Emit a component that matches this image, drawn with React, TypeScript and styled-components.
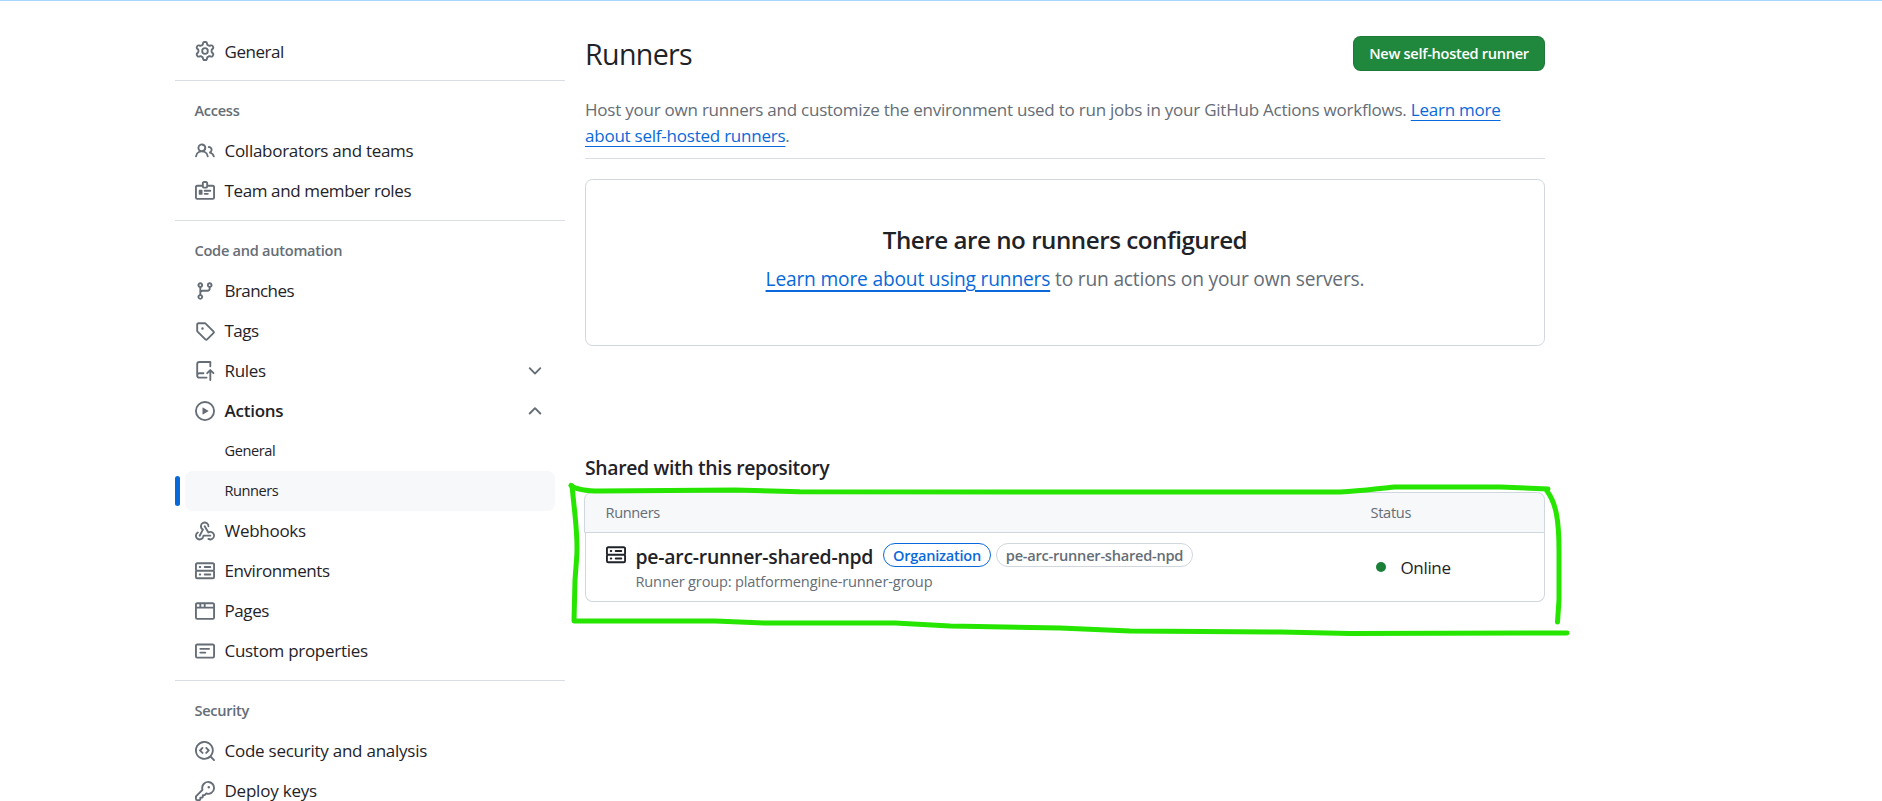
import React from "react";
import styled, { createGlobalStyle, css } from "styled-components";

const GlobalStyle = createGlobalStyle`
  *, *::before, *::after { box-sizing: border-box; }
  html, body { margin: 0; padding: 0; background: #fff; }
  body {
    height: 801px;
    overflow: hidden;
    color: #1f2328;
    font-family: "Open Sans", "Noto Sans", sans-serif;
    font-size: 17px;
  }
  h1, h2, h3, p { margin: 0; font-weight: 400; }
`;

const icons = {
  gear: "M8 0a8.2 8.2 0 0 1 .701.031C9.444.095 9.99.645 10.16 1.29l.288 1.107c.018.066.079.158.212.224.231.114.454.243.668.386.123.082.233.09.299.071l1.103-.303c.644-.176 1.392.021 1.82.63.27.385.506.792.704 1.218.315.675.111 1.422-.364 1.891l-.814.806c-.049.048-.098.147-.088.294.016.257.016.515 0 .772-.01.147.038.246.088.294l.814.806c.475.469.679 1.216.364 1.891a7.977 7.977 0 0 1-.704 1.217c-.428.61-1.176.807-1.82.63l-1.102-.302c-.067-.019-.177-.011-.3.071a5.909 5.909 0 0 1-.668.386c-.133.066-.194.158-.211.224l-.29 1.106c-.168.646-.715 1.196-1.458 1.26a8.006 8.006 0 0 1-1.402 0c-.743-.064-1.289-.614-1.458-1.26l-.289-1.106c-.018-.066-.079-.158-.212-.224a5.738 5.738 0 0 1-.668-.386c-.123-.082-.233-.09-.299-.071l-1.103.303c-.644.176-1.392-.021-1.82-.63a8.12 8.12 0 0 1-.704-1.218c-.315-.675-.111-1.422.363-1.891l.815-.806c.05-.048.098-.147.088-.294a6.214 6.214 0 0 1 0-.772c.01-.147-.038-.246-.088-.294l-.815-.806C.635 6.045.431 5.298.746 4.623a7.92 7.92 0 0 1 .704-1.217c.428-.61 1.176-.807 1.82-.63l1.102.302c.067.019.177.011.3-.071.214-.143.437-.272.668-.386.133-.066.194-.158.211-.224l.29-1.106C6.009.645 6.556.095 7.299.03 7.53.01 7.764 0 8 0Zm-.571 1.525c-.036.003-.108.036-.137.146l-.289 1.105c-.147.561-.549.967-.998 1.189-.173.086-.34.183-.5.29-.417.278-.97.423-1.529.27l-1.103-.303c-.109-.03-.175.016-.195.045-.22.312-.412.644-.573.99-.014.031-.021.11.059.19l.815.806c.411.406.562.957.53 1.456a4.709 4.709 0 0 0 0 .582c.032.499-.119 1.05-.53 1.456l-.815.806c-.081.08-.073.159-.059.19.162.346.353.677.573.989.02.03.085.076.195.046l1.102-.303c.56-.153 1.113-.008 1.53.27.161.107.328.204.501.29.447.222.85.629.997 1.189l.289 1.105c.029.109.101.143.137.146a6.6 6.6 0 0 0 1.142 0c.036-.003.108-.036.137-.146l.289-1.105c.147-.561.549-.967.998-1.189.173-.086.34-.183.5-.29.417-.278.97-.423 1.529-.27l1.103.303c.109.029.175-.016.195-.045.22-.313.411-.644.573-.99.014-.031.021-.11-.059-.19l-.815-.806c-.411-.406-.562-.957-.53-1.456a4.709 4.709 0 0 0 0-.582c-.032-.499.119-1.05.53-1.456l.815-.806c.081-.08.073-.159.059-.19a6.464 6.464 0 0 0-.573-.989c-.02-.03-.085-.076-.195-.046l-1.102.303c-.56.153-1.113.008-1.53-.27a4.44 4.44 0 0 0-.501-.29c-.447-.222-.85-.629-.997-1.189l-.289-1.105c-.029-.11-.101-.143-.137-.146a6.6 6.6 0 0 0-1.142 0ZM11 8a3 3 0 1 1-6 0 3 3 0 0 1 6 0ZM9.5 8a1.5 1.5 0 1 0-3.001.001A1.5 1.5 0 0 0 9.5 8Z",
  people: "M2 5.5a3.5 3.5 0 1 1 5.898 2.549 5.508 5.508 0 0 1 3.034 4.084.75.75 0 1 1-1.482.235 4 4 0 0 0-7.9 0 .75.75 0 0 1-1.482-.236A5.507 5.507 0 0 1 3.102 8.05 3.493 3.493 0 0 1 2 5.5ZM11 4a3.001 3.001 0 0 1 2.22 5.018 5.01 5.01 0 0 1 2.56 3.012.749.749 0 0 1-.885.954.752.752 0 0 1-.549-.514 3.507 3.507 0 0 0-2.522-2.372.75.75 0 0 1-.574-.73v-.352a.75.75 0 0 1 .416-.672A1.5 1.5 0 0 0 11 5.5.75.75 0 0 1 11 4Zm-5.5-.5a2 2 0 1 0-.001 3.999A2 2 0 0 0 5.5 3.5Z",
  badge: "M3 7.5a.5.5 0 0 1 .5-.5h2a.5.5 0 0 1 .5.5v3a.5.5 0 0 1-.5.5h-2a.5.5 0 0 1-.5-.5v-3Zm10 .25a.75.75 0 0 1-.75.75h-4.5a.75.75 0 0 1 0-1.5h4.5a.75.75 0 0 1 .75.75ZM10.25 11h-2.5a.75.75 0 0 1 0-1.5h2.5a.75.75 0 0 1 0 1.5Z M7.25 0h1.5c.966 0 1.75.784 1.75 1.75V3h3.75c.966 0 1.75.784 1.75 1.75v8.5A1.75 1.75 0 0 1 14.25 15H1.75A1.75 1.75 0 0 1 0 13.25v-8.5C0 3.784.784 3 1.75 3H5.5V1.75C5.5.784 6.284 0 7.25 0Zm3.232 4.5A1.75 1.75 0 0 1 8.75 6h-1.5a1.75 1.75 0 0 1-1.732-1.5H1.75a.25.25 0 0 0-.25.25v8.5c0 .138.112.25.25.25h12.5a.25.25 0 0 0 .25-.25v-8.5a.25.25 0 0 0-.25-.25ZM7 1.75v2.5c0 .138.112.25.25.25h1.5A.25.25 0 0 0 9 4.25v-2.5a.25.25 0 0 0-.25-.25h-1.5a.25.25 0 0 0-.25.25Z",
  branch: "M9.5 3.25a2.25 2.25 0 1 1 3 2.122V6A2.5 2.5 0 0 1 10 8.5H6a1 1 0 0 0-1 1v1.128a2.251 2.251 0 1 1-1.5 0V5.372a2.25 2.25 0 1 1 1.5 0v1.836A2.493 2.493 0 0 1 6 7h4a1 1 0 0 0 1-1v-.628A2.25 2.25 0 0 1 9.5 3.25Zm-6 0a.75.75 0 1 0 1.5 0 .75.75 0 0 0-1.5 0Zm8.25-.75a.75.75 0 1 0 0 1.5.75.75 0 0 0 0-1.5ZM4.25 12a.75.75 0 1 0 0 1.5.75.75 0 0 0 0-1.5Z",
  tag: "M1 7.775V2.75C1 1.784 1.784 1 2.75 1h5.025c.464 0 .91.184 1.238.513l6.25 6.25a1.75 1.75 0 0 1 0 2.474l-5.026 5.026a1.75 1.75 0 0 1-2.474 0l-6.25-6.25A1.752 1.752 0 0 1 1 7.775Zm1.5 0c0 .066.026.13.073.177l6.25 6.25a.25.25 0 0 0 .354 0l5.025-5.025a.25.25 0 0 0 0-.354l-6.25-6.25a.25.25 0 0 0-.177-.073H2.75a.25.25 0 0 0-.25.25ZM6 5a1 1 0 1 1 0 2 1 1 0 0 1 0-2Z",
  rules: "M1 2.5A2.5 2.5 0 0 1 3.5 0h8.75a.75.75 0 0 1 .75.75v3.5a.75.75 0 0 1-1.5 0V1.5h-8a1 1 0 0 0-1 1v6.708A2.493 2.493 0 0 1 3.5 9h3.25a.75.75 0 0 1 0 1.5H3.5a1 1 0 1 0 0 2h5.75a.75.75 0 0 1 0 1.5H3.5A2.5 2.5 0 0 1 1 11.5v-9Zm13.23 7.79a.75.75 0 0 0 1.06-1.06l-2.505-2.505a.75.75 0 0 0-1.06 0L9.22 9.229a.75.75 0 0 0 1.06 1.061l1.225-1.224v6.184a.75.75 0 0 0 1.5 0V9.066l1.224 1.224Z",
  play: "M8 0a8 8 0 1 1 0 16A8 8 0 0 1 8 0ZM1.5 8a6.5 6.5 0 1 0 13 0 6.5 6.5 0 0 0-13 0Zm4.879-2.773 4.264 2.559a.25.25 0 0 1 0 .428l-4.264 2.559A.25.25 0 0 1 6 10.559V5.442a.25.25 0 0 1 .379-.215Z",
  webhook: "M5.5 4.25a2.25 2.25 0 0 1 4.5 0 .75.75 0 0 0 1.5 0 3.75 3.75 0 1 0-6.14 2.889l-2.272 4.258a.75.75 0 0 0 1.324.706L7 7.25a.75.75 0 0 0-.309-1.015A2.25 2.25 0 0 1 5.5 4.25Z M7.364 3.607a.75.75 0 0 1 1.03.257l2.608 4.349a3.75 3.75 0 1 1-.628 6.785.75.75 0 0 1 .752-1.299 2.25 2.25 0 1 0-.033-3.88.75.75 0 0 1-1.03-.256L7.107 4.636a.75.75 0 0 1 .257-1.03Z M2.9 8.776A.75.75 0 0 1 2.625 9.8 2.25 2.25 0 1 0 6 11.75a.75.75 0 0 1 .75-.751h5.5a.75.75 0 0 1 0 1.5H7.425a3.751 3.751 0 1 1-5.55-3.998.75.75 0 0 1 1.024.274Z",
  server: "M1.75 1h12.5c.966 0 1.75.784 1.75 1.75v4c0 .372-.116.717-.314 1 .198.283.314.628.314 1v4a1.75 1.75 0 0 1-1.75 1.75H1.75A1.75 1.75 0 0 1 0 12.75v-4c0-.358.109-.707.314-1a1.739 1.739 0 0 1-.314-1v-4C0 1.784.784 1 1.75 1ZM1.5 2.75v4c0 .138.112.25.25.25h12.5a.25.25 0 0 0 .25-.25v-4a.25.25 0 0 0-.25-.25H1.75a.25.25 0 0 0-.25.25Zm.25 5.75a.25.25 0 0 0-.25.25v4c0 .138.112.25.25.25h12.5a.25.25 0 0 0 .25-.25v-4a.25.25 0 0 0-.25-.25ZM7 4.75A.75.75 0 0 1 7.75 4h4.5a.75.75 0 0 1 0 1.5h-4.5A.75.75 0 0 1 7 4.75ZM7.75 10h4.5a.75.75 0 0 1 0 1.5h-4.5a.75.75 0 0 1 0-1.5ZM3 4.75A.75.75 0 0 1 3.75 4h.5a.75.75 0 0 1 0 1.5h-.5A.75.75 0 0 1 3 4.75ZM3.75 10h.5a.75.75 0 0 1 0 1.5h-.5a.75.75 0 0 1 0-1.5Z",
  browser: "M0 2.75C0 1.784.784 1 1.75 1h12.5c.966 0 1.75.784 1.75 1.75v10.5A1.75 1.75 0 0 1 14.25 15H1.75A1.75 1.75 0 0 1 0 13.25ZM14.5 6h-13v7.25c0 .138.112.25.25.25h12.5a.25.25 0 0 0 .25-.25Zm-6-3.5v2h6V2.75a.25.25 0 0 0-.25-.25ZM5 2.5v2h2v-2Zm-3.25 0a.25.25 0 0 0-.25.25V4.5h2v-2Z",
  note: "M0 3.75C0 2.784.784 2 1.75 2h12.5c.966 0 1.75.784 1.75 1.75v8.5A1.75 1.75 0 0 1 14.25 14H1.75A1.75 1.75 0 0 1 0 12.25Zm1.75-.25a.25.25 0 0 0-.25.25v8.5c0 .138.112.25.25.25h12.5a.25.25 0 0 0 .25-.25v-8.5a.25.25 0 0 0-.25-.25ZM3.5 6.25a.75.75 0 0 1 .75-.75h7a.75.75 0 0 1 0 1.5h-7a.75.75 0 0 1-.75-.75Zm.75 2.25h4a.75.75 0 0 1 0 1.5h-4a.75.75 0 0 1 0-1.5Z",
  codescan: "M8.47 4.97a.75.75 0 0 0 0 1.06L9.94 7.5 8.47 8.97a.75.75 0 1 0 1.06 1.06l2-2a.75.75 0 0 0 0-1.06l-2-2a.75.75 0 0 0-1.06 0ZM6.53 6.03a.75.75 0 0 0-1.06-1.06l-2 2a.75.75 0 0 0 0 1.06l2 2a.75.75 0 1 0 1.06-1.06L5.06 7.5l1.47-1.47Z M12.246 13.307a7.501 7.501 0 1 1 1.06-1.06l2.474 2.473a.749.749 0 0 1-.326 1.275.749.749 0 0 1-.734-.215ZM1.5 7.5a6.002 6.002 0 0 0 3.608 5.504 6.002 6.002 0 0 0 6.486-1.117.748.748 0 0 1 .292-.293A6 6 0 1 0 1.5 7.5Z",
  key: "M10.5 0a5.499 5.499 0 1 1-1.288 10.848l-.932.932a.749.749 0 0 1-.53.22H7v.75a.749.749 0 0 1-.22.53l-.5.5a.749.749 0 0 1-.53.22H5v.75a.749.749 0 0 1-.22.53l-.5.5a.749.749 0 0 1-.53.22h-2A1.75 1.75 0 0 1 0 14.25v-2c0-.199.079-.389.22-.53l4.932-4.932A5.5 5.5 0 0 1 10.5 0Zm-4 5.5c-.001.431.069.86.205 1.269a.75.75 0 0 1-.181.768L1.5 12.56v1.69c0 .138.112.25.25.25h1.69l.06-.06v-1.19a.75.75 0 0 1 .75-.75h1.19l.06-.06v-1.19a.75.75 0 0 1 .75-.75h1.19l1.023-1.025a.75.75 0 0 1 .768-.18A4 4 0 1 0 6.5 5.5ZM11 6a1 1 0 1 1 0-2 1 1 0 0 1 0 2Z",
  down: "M12.78 5.22a.749.749 0 0 1 0 1.06l-4.25 4.25a.749.749 0 0 1-1.06 0L3.22 6.28a.749.749 0 1 1 1.06-1.06L8 8.939l3.72-3.719a.749.749 0 0 1 1.06 0Z",
  up: "M3.22 10.53a.749.749 0 0 1 0-1.06l4.25-4.25a.749.749 0 0 1 1.06 0l4.25 4.25a.749.749 0 1 1-1.06 1.06L8 6.811 4.28 10.53a.749.749 0 0 1-1.06 0Z",
};
type IconName = keyof typeof icons;

const Glyph = styled.svg`
  display: block;
  flex: none;
  width: 20px;
  height: 20px;
  fill: currentColor;
`;
const Icon = ({ name }: { name: IconName }) => (
  <Glyph viewBox="0 0 16 16" aria-hidden="true">
    <path fillRule="evenodd" d={icons[name]} />
  </Glyph>
);

interface Tracked {
  $track?: number;
}
const tracking = css<Tracked>`
  letter-spacing: ${(p) => p.$track ?? 0}px;
`;

const Page = styled.div`
  position: relative;
  display: flex;
  gap: 20px;
  height: 801px;
  padding: 30px 0 0 175px;
  border-top: 1px solid #a5d6ff;
  overflow: hidden;
`;

const Sidebar = styled.nav`
  width: 390px;
  flex: none;
`;
const SectionTitle = styled.h3<Tracked>`
  ${tracking}
  height: 50px;
  padding: 9px 19.5px 0;
  line-height: 41px;
  font-size: 14.6px;
  font-weight: 600;
  color: #656d76;
`;
const NavItem = styled.a<{ $selected?: boolean }>`
  position: relative;
  display: flex;
  align-items: center;
  gap: 9.5px;
  height: 40px;
  margin: 0 10px;
  padding: 0 10px;
  border-radius: 7.5px;
  color: #656d76;
  ${(p) =>
    p.$selected &&
    css`
      background: #f6f8fa;
      &::before {
        content: "";
        position: absolute;
        left: -10px;
        top: 5px;
        width: 5px;
        height: 30px;
        border-radius: 7.5px;
        background: #0969da;
      }
    `}
`;
const NavLabel = styled.span<Tracked & { $sub?: boolean; $strong?: boolean }>`
  ${tracking}
  flex: 1;
  padding: ${(p) => (p.$sub ? "0 0 2px 29.5px" : "0")};
  color: #1f2328;
  font-size: ${(p) => (p.$sub ? 14.6 : 17)}px;
  font-weight: ${(p) => (p.$strong ? 600 : 400)};
  line-height: 24px;
  white-space: nowrap;
`;
const Section = styled.section`
  & + & {
    margin-top: 9px;
    border-top: 1px solid #d8dee4;
  }
  &:first-child ${NavLabel} {
    padding-top: 2px;
  }
`;

interface Entry {
  label: string;
  track: number;
  icon?: IconName;
  toggle?: "up" | "down";
  strong?: boolean;
  selected?: boolean;
}
const sections: { title?: string; track?: number; entries: Entry[] }[] = [
  { entries: [{ label: "General", icon: "gear", track: -0.45 }] },
  {
    title: "Access",
    track: -0.3,
    entries: [
      { label: "Collaborators and teams", icon: "people", track: -0.28 },
      { label: "Team and member roles", icon: "badge", track: -0.38 },
    ],
  },
  {
    title: "Code and automation",
    track: -0.27,
    entries: [
      { label: "Branches", icon: "branch", track: -0.57 },
      { label: "Tags", icon: "tag", track: -0.5 },
      { label: "Rules", icon: "rules", toggle: "down", track: -0.3 },
      { label: "Actions", icon: "play", toggle: "up", strong: true, track: -0.25 },
      { label: "General", track: -0.42 },
      { label: "Runners", selected: true, track: -0.45 },
      { label: "Webhooks", icon: "webhook", track: -0.28 },
      { label: "Environments", icon: "server", track: -0.42 },
      { label: "Pages", icon: "browser", track: -0.4 },
      { label: "Custom properties", icon: "note", track: -0.29 },
    ],
  },
  {
    title: "Security",
    track: -0.3,
    entries: [
      { label: "Code security and analysis", icon: "codescan", track: -0.25 },
      { label: "Deploy keys", icon: "key", track: -0.22 },
    ],
  },
];

const Main = styled.main`
  width: 960px;
  flex: none;
`;
const TitleBar = styled.header`
  display: flex;
  align-items: flex-start;
  justify-content: space-between;
  height: 66px;
`;
const Title = styled.h1<Tracked>`
  ${tracking}
  font-size: 28.6px;
  line-height: 45px;
`;
const PrimaryButton = styled.button<Tracked>`
  ${tracking}
  width: 192px;
  height: 35px;
  margin-top: 5px;
  padding: 0;
  border: 1px solid rgba(31, 35, 40, 0.15);
  border-radius: 7.5px;
  background: #1f883d;
  color: #fff;
  font-family: inherit;
  font-size: 14.6px;
  font-weight: 600;
  line-height: 31px;
  white-space: nowrap;
`;
const Intro = styled.p<Tracked>`
  ${tracking}
  height: 62px;
  border-bottom: 1px solid #d8dee4;
  color: #656d76;
  line-height: 26px;
  white-space: nowrap;
`;
const Link = styled.a<{ $thick?: boolean }>`
  color: #0969da;
  text-decoration: underline;
  text-decoration-thickness: ${(p) => (p.$thick ? 2 : 1)}px;
  text-underline-offset: 4px;
  text-decoration-skip-ink: auto;
`;
const Blank = styled.section`
  height: 167px;
  margin-top: 20px;
  padding-top: 41px;
  border: 1px solid #d0d7de;
  border-radius: 7.5px;
  text-align: center;
`;
const BlankTitle = styled.h2<Tracked>`
  ${tracking}
  font-size: 24.2px;
  font-weight: 600;
  line-height: 37px;
`;
const BlankText = styled.p<Tracked>`
  ${tracking}
  margin-top: 5px;
  color: #656d76;
  font-size: 19.2px;
  line-height: 32px;
`;
const SharedTitle = styled.h2<Tracked>`
  ${tracking}
  margin-top: 106px;
  font-size: 19.4px;
  font-weight: 600;
  line-height: 32px;
`;
const Table = styled.section`
  margin-top: 8px;
`;
const TableHead = styled.div`
  display: flex;
  height: 41px;
  margin-left: -1px;
  padding: 0 0 0 20.5px;
  border: 1px solid #d0d7de;
  border-radius: 7.5px 7.5px 0 0;
  background: #f6f8fa;
  color: #656d76;
  font-size: 14.6px;
  line-height: 39px;
`;
const HeadCell = styled.span<Tracked & { $grow?: boolean }>`
  ${tracking}
  flex: ${(p) => (p.$grow ? "1" : "0 0 173.5px")};
`;
const TableRow = styled.div`
  display: flex;
  height: 69px;
  padding-left: 20px;
  border: 1px solid #d0d7de;
  border-top: 0;
  border-radius: 0 0 7.5px 7.5px;
`;
const RunnerIcon = styled.span`
  padding-top: 12px;
  margin-right: 9.5px;
`;
const Runner = styled.div`
  flex: 1;
  padding-top: 10px;
`;
const RunnerLine = styled.div`
  display: flex;
  align-items: flex-start;
  height: 30px;
`;
const RunnerName = styled.strong<Tracked>`
  ${tracking}
  width: 247.5px;
  font-size: 19.4px;
  font-weight: 600;
  line-height: 28px;
  white-space: nowrap;
`;
const Pill = styled.span<Tracked & { $accent?: boolean; $width: number }>`
  ${tracking}
  width: ${(p) => p.$width}px;
  height: 24px;
  margin-right: 5px;
  border: 1px solid ${(p) => (p.$accent ? "#0969da" : "#d0d7de")};
  border-radius: 12px;
  color: ${(p) => (p.$accent ? "#0969da" : "#656d76")};
  font-size: 14.6px;
  font-weight: 600;
  line-height: 23px;
  text-align: center;
  white-space: nowrap;
`;
const RunnerGroup = styled.div<Tracked>`
  ${tracking}
  color: #656d76;
  font-size: 14.6px;
  line-height: 16px;
`;
const Status = styled.div`
  display: flex;
  align-items: center;
  gap: 14.5px;
  flex: 0 0 168px;
  &::before {
    content: "";
    width: 10px;
    height: 10px;
    border-radius: 50%;
    background: #1a7f37;
  }
`;
const StatusText = styled.span<Tracked>`
  ${tracking}
  padding-top: 2px;
  line-height: 24px;
`;
const Marker = styled.svg`
  position: absolute;
  left: 0;
  top: -1px;
  width: 1882px;
  height: 801px;
  fill: none;
  stroke: #26e600;
  stroke-width: 5;
  stroke-linecap: round;
  stroke-linejoin: round;
  pointer-events: none;
`;

export default function App() {
  return (
    <Page>
      <GlobalStyle />
      <Sidebar>
        {sections.map((s, i) => (
          <Section key={i}>
            {s.title && <SectionTitle $track={s.track}>{s.title}</SectionTitle>}
            {s.entries.map((e) => (
              <NavItem key={e.label} $selected={e.selected}>
                {e.icon && <Icon name={e.icon} />}
                <NavLabel $sub={!e.icon} $strong={e.strong} $track={e.track}>
                  {e.label}
                </NavLabel>
                {e.toggle && <Icon name={e.toggle} />}
              </NavItem>
            ))}
          </Section>
        ))}
      </Sidebar>
      <Main>
        <TitleBar>
          <Title $track={-0.65}>Runners</Title>
          <PrimaryButton $track={-0.3}>New self-hosted runner</PrimaryButton>
        </TitleBar>
        <Intro $track={-0.23}>
          Host your own runners and customize the environment used to run jobs in your GitHub Actions workflows.{" "}
          <Link>Learn more</Link>
          <br />
          <Link>about self-hosted runners</Link>.
        </Intro>
        <Blank>
          <BlankTitle $track={-0.49}>There are no runners configured</BlankTitle>
          <BlankText $track={-0.19}>
            <Link $thick>Learn more about using runners</Link> to run actions on your own servers.
          </BlankText>
        </Blank>
        <SharedTitle $track={-0.34}>Shared with this repository</SharedTitle>
        <Table>
          <TableHead>
            <HeadCell $grow $track={-0.38}>Runners</HeadCell>
            <HeadCell $track={-0.3}>Status</HeadCell>
          </TableHead>
          <TableRow>
            <RunnerIcon>
              <Icon name="server" />
            </RunnerIcon>
            <Runner>
              <RunnerLine>
                <RunnerName $track={-0.24}>pe-arc-runner-shared-npd</RunnerName>
                <Pill $accent $width={108} $track={-0.27}>Organization</Pill>
                <Pill $width={197} $track={-0.24}>pe-arc-runner-shared-npd</Pill>
              </RunnerLine>
              <RunnerGroup $track={-0.17}>Runner group: platformengine-runner-group</RunnerGroup>
            </Runner>
            <Status>
              <StatusText $track={-0.35}>Online</StatusText>
            </Status>
          </TableRow>
        </Table>
      </Main>
      <Marker viewBox="0 0 1882 801" aria-hidden="true">
        <path d="M571 485.5C577 490 590 491 600 491L735 490L800 491.7L1060 492H1340C1365 491 1380 488 1395 487H1500L1548 489" />
        <path d="M572 486L575 515Q578 545 576.5 560L575 580L574 621H715L765 623H895L950 626L1060 628L1130 631L1280 632L1350 633.5L1567 633" />
        <path d="M1547 491C1556 503 1559 520 1559 550V600L1557.5 622" />
      </Marker>
    </Page>
  );
}
